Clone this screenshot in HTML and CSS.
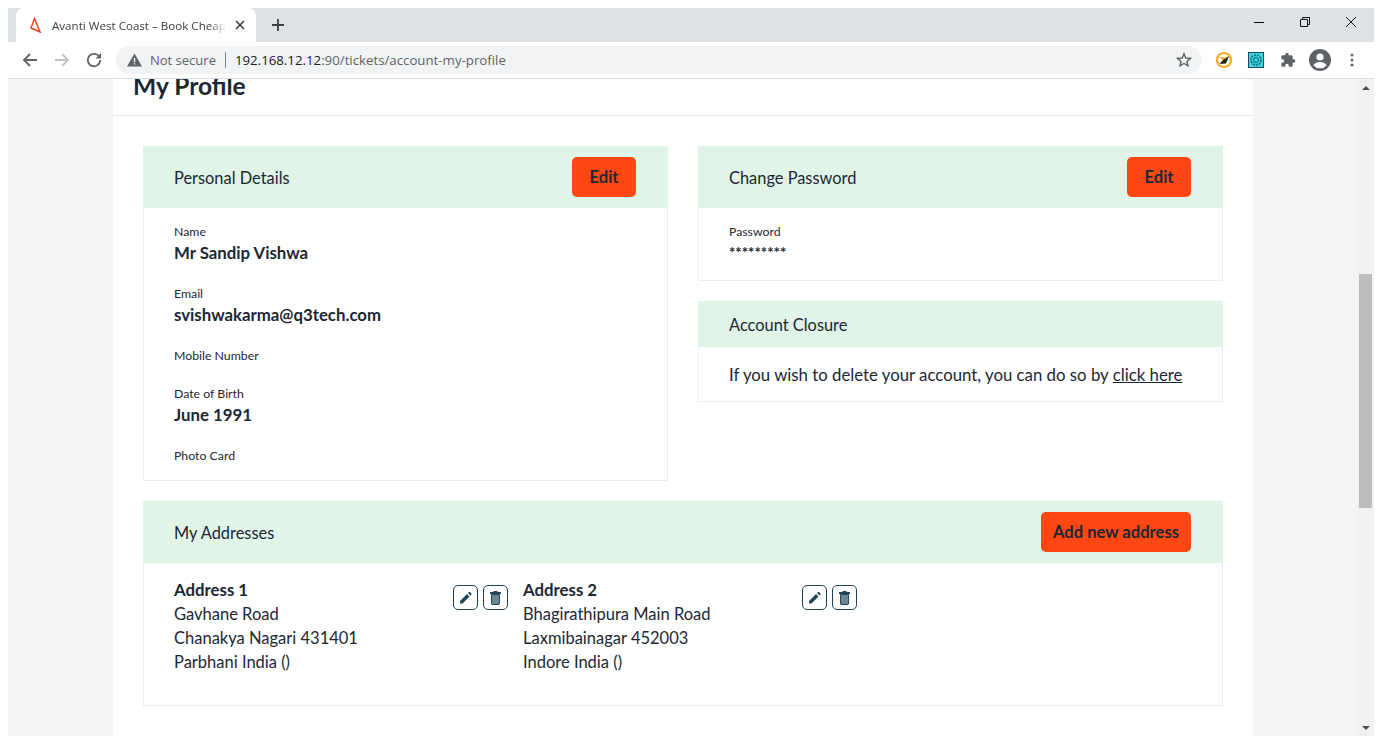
FILE: index.html
```html
<!DOCTYPE html>
<html lang="en">
<head>
    <meta charset="UTF-8">
    <title>Avanti West Coast – Book Cheap</title>
    <link rel="stylesheet" href="styles.css">
</head>
<body>
<div class="window">
    <!-- tab strip -->
    <div class="tabstrip">
        <div class="tab">
            <svg class="favicon" width="12" height="16" viewBox="0 0 12 16"><path d="M4.500 1.500 1 11 10 15Z" fill="none" stroke="#f0431c" stroke-width="1.500"/></svg>
            <span class="tab-title">Avanti West Coast – Book Cheap</span>
            <svg class="tab-close" width="10" height="10" viewBox="0 0 10 10"><path d="M1 1 9 9M9 1 1 9" stroke="#3c4043" stroke-width="1.7"/></svg>
        </div>
        <svg class="newtab" width="14" height="14" viewBox="0 0 14 14"><path d="M7 1V13M1 7H13" stroke="#3c4043" stroke-width="1.8"/></svg>
        <div class="winctl">
            <svg width="46" height="28" viewBox="0 0 46 28"><path d="M18 14.500H28" stroke="#111" stroke-width="1"/></svg>
            <svg width="46" height="28" viewBox="0 0 46 28"><path d="M18.500 11.500h7v7h-7zM20.500 11.500v-2h7v7h-2" fill="none" stroke="#111" stroke-width="1"/></svg>
            <svg width="46" height="28" viewBox="0 0 46 28"><path d="M18 9 28 19M28 9 18 19" stroke="#111" stroke-width="1"/></svg>
        </div>
    </div>

    <!-- toolbar -->
    <div class="toolbar">
        <span class="tool"><svg width="16" height="16" viewBox="0 0 16 16"><path d="M15 8H2M8 2 2 8l6 6" fill="none" stroke="#5f6368" stroke-width="1.8"/></svg></span>
        <span class="tool"><svg width="16" height="16" viewBox="0 0 16 16"><path d="M1 8H14M8 2l6 6-6 6" fill="none" stroke="#bdc1c6" stroke-width="1.8"/></svg></span>
        <span class="tool"><svg width="16" height="16" viewBox="0 0 16 16"><path d="M13.500 5.200A6.200 6.200 0 1 0 14.200 8" fill="none" stroke="#5f6368" stroke-width="1.8"/><path d="M15 1v5.500H9.500Z" fill="#5f6368"/></svg></span>
        <div class="omnibox">
            <svg width="15" height="14" viewBox="0 0 15 14"><path d="M7.500 .5 15 13.500H0Z" fill="#5f6368"/><path d="M6.800 5h1.400v4.300H6.800zM6.800 10.200h1.400v1.400H6.800z" fill="#fff"/></svg>
            <span class="not-secure">Not secure</span>
            <span class="omni-sep"></span>
            <span class="url"><span class="url-host">192.168.12.12</span>:90/tickets/account-my-profile</span>
            <svg class="star" width="16" height="16" viewBox="0 0 16 16"><path d="M8 1.800 9.800 6l4.600.4-3.500 3 1.100 4.500L8 11.500l-4 2.400 1.100-4.500-3.500-3L6.200 6Z" fill="none" stroke="#5f6368" stroke-width="1.400"/></svg>
        </div>
        <div class="tool-group">
            <span class="tool"><svg width="18" height="18" viewBox="0 0 18 18"><circle cx="9" cy="9" r="7" fill="#fff" stroke="#f7a823" stroke-width="2.200"/><path d="M4.500 6H11L8 9.500Z" fill="#f7a823"/><path d="M14 5 8 9 4.500 13l6.500-.5Z" fill="#222"/></svg></span>
            <span class="tool"><svg width="16" height="16" viewBox="0 0 16 16"><rect x=".5" y=".5" width="15" height="15" fill="#38d3e0" stroke="#17505a"/><circle cx="8" cy="8" r="5" fill="none" stroke="#17606e" stroke-width="1.400" stroke-dasharray="2 1"/><circle cx="8" cy="8" r="2.500" fill="none" stroke="#17606e"/></svg></span>
            <span class="tool"><svg width="16" height="16" viewBox="0 0 24 24"><path d="M20.500 11H19V7c0-1.100-.9-2-2-2h-4V3.500C13 2.120 11.880 1 10.500 1S8 2.120 8 3.500V5H4c-1.100 0-1.990.9-1.990 2v3.800H3.500c1.490 0 2.700 1.210 2.700 2.700s-1.210 2.700-2.700 2.700H2V20c0 1.100.9 2 2 2h3.800v-1.500c0-1.490 1.210-2.700 2.700-2.700 1.490 0 2.700 1.210 2.700 2.700V22H17c1.100 0 2-.9 2-2v-4h1.500c1.380 0 2.500-1.120 2.500-2.500S21.880 11 20.500 11z" fill="#5f6368"/></svg></span>
            <span class="tool"><svg width="22" height="22" viewBox="0 0 22 22"><circle cx="11" cy="11" r="11" fill="#5f6368"/><circle cx="11" cy="8" r="3.600" fill="#fff"/><path d="M4.300 16.200c1.500-2.300 4-3.200 6.700-3.200s5.200.9 6.700 3.200A8.600 8.600 0 0 1 11 19.200a8.600 8.600 0 0 1-6.700-3Z" fill="#fff"/></svg></span>
            <span class="tool"><svg width="4" height="14" viewBox="0 0 4 14"><circle cx="2" cy="2" r="1.500" fill="#5f6368"/><circle cx="2" cy="7" r="1.500" fill="#5f6368"/><circle cx="2" cy="12" r="1.500" fill="#5f6368"/></svg></span>
        </div>
    </div>

    <!-- page -->
    <div class="viewport">
        <div class="page">
            <main class="card">
                <div class="card-head">
                    <h1>My Profile</h1>
                </div>
                <div class="card-body">
                    <div class="columns">
                        <section class="panel">
                            <div class="panel-head">
                                <h2>Personal Details</h2>
                                <button class="btn" type="button">Edit</button>
                            </div>
                            <div class="panel-body">
                                <div class="field"><label>Name</label><strong>Mr Sandip Vishwa</strong></div>
                                <div class="field"><label>Email</label><strong>svishwakarma@q3tech.com</strong></div>
                                <div class="field"><label>Mobile Number</label></div>
                                <div class="field"><label>Date of Birth</label><strong>June 1991</strong></div>
                                <div class="field"><label>Photo Card</label></div>
                            </div>
                        </section>

                        <div class="stack">
                            <section class="panel">
                                <div class="panel-head">
                                    <h2>Change Password</h2>
                                    <button class="btn" type="button">Edit</button>
                                </div>
                                <div class="panel-body password-body">
                                    <label>Password</label>
                                    <div class="stars">*********</div>
                                </div>
                            </section>
                            <section class="panel">
                                <div class="panel-head slim">
                                    <h2>Account Closure</h2>
                                </div>
                                <div class="closure">If you wish to delete your account, you can do so by <a href="#">click here</a></div>
                            </section>
                        </div>
                    </div>

                    <section class="panel">
                        <div class="panel-head">
                            <h2>My Addresses</h2>
                            <button class="btn" type="button">Add new address</button>
                        </div>
                        <div class="addresses">
                            <div class="address">
                                <div class="address-text">
                                    <strong>Address 1</strong>
                                    <div>Gavhane Road</div>
                                    <div>Chanakya Nagari 431401</div>
                                    <div>Parbhani India ()</div>
                                </div>
                                <button class="icon-btn" type="button"><svg width="13" height="13" viewBox="0 0 13 13"><path d="M1 12.500V10L8 3l2.500 2.500-7 7ZM9 2l1-1h1l1.500 1.500v1l-1 1Z" fill="#1f4656"/></svg></button>
                                <button class="icon-btn" type="button"><svg width="11" height="14" viewBox="0 0 11 14"><path d="M0 1h11v2H0ZM3.500 0h4v1h-4Z" fill="#1f4656"/><path d="M1.500 3.500h8V13l-.5.5H2l-.5-.5Z" fill="#6c8591" stroke="#1f4656"/></svg></button>
                            </div>
                            <div class="address">
                                <div class="address-text">
                                    <strong>Address 2</strong>
                                    <div>Bhagirathipura Main Road</div>
                                    <div>Laxmibainagar 452003</div>
                                    <div>Indore India ()</div>
                                </div>
                                <button class="icon-btn" type="button"><svg width="13" height="13" viewBox="0 0 13 13"><path d="M1 12.500V10L8 3l2.500 2.500-7 7ZM9 2l1-1h1l1.500 1.500v1l-1 1Z" fill="#1f4656"/></svg></button>
                                <button class="icon-btn" type="button"><svg width="11" height="14" viewBox="0 0 11 14"><path d="M0 1h11v2H0ZM3.500 0h4v1h-4Z" fill="#1f4656"/><path d="M1.500 3.500h8V13l-.5.5H2l-.5-.5Z" fill="#6c8591" stroke="#1f4656"/></svg></button>
                            </div>
                        </div>
                    </section>
                </div>
            </main>
        </div>
        <div class="scrollbar">
            <span class="arrow-up"></span>
            <span class="thumb"></span>
            <span class="arrow-down"></span>
        </div>
    </div>
</div>
</body>
</html>
```

FILE: styles.css
```css
html, body {
    height: 100%;
    overflow: hidden;
}
body {
    background: #fff;
    color: #1b2733;
    font-family: Lato, Arial, sans-serif;
    font-size: 16px;
}
h1, h2 {
    margin: 0;
}
.window {
    height: 728px;
    display: flex;
    flex-direction: column;
}

/* browser chrome */
.tabstrip {
    height: 34px;
    flex: none;
    display: flex;
    align-items: center;
    background: #dee1e6;
    padding-left: 8px;
}
.tab {
    width: 240px;
    height: 34px;
    background: #fff;
    border-radius: 8px 8px 0 0;
    display: flex;
    align-items: center;
    padding: 0 11px 0 14px;
    box-sizing: border-box;
}
.favicon {
    flex: none;
}
.tab-title {
    margin-left: 10px;
    width: 174px;
    overflow: hidden;
    white-space: nowrap;
    font-family: "Open Sans", Arial, sans-serif;
    font-size: 11.6px;
    color: #3c4043;
    -webkit-mask-image: linear-gradient(to right, #000 158px, transparent 174px);
    mask-image: linear-gradient(to right, #000 158px, transparent 174px);
}
.tab-close {
    margin-left: auto;
}
.newtab {
    margin-left: 15px;
}
.winctl {
    margin-left: auto;
    display: flex;
    align-items: center;
    margin-top: -6px;
}
.toolbar {
    height: 36px;
    flex: none;
    display: flex;
    align-items: center;
    padding: 0 6px;
    background: #fff;
    border-bottom: 1px solid #dadce0;
}
.tool {
    width: 32px;
    height: 32px;
    display: flex;
    align-items: center;
    justify-content: center;
    flex: none;
}
.tool-group {
    display: flex;
    margin-left: 6px;
}
.omnibox {
    flex: 1;
    height: 28px;
    margin-left: 6px;
    background: #f1f3f4;
    border-radius: 14px;
    display: flex;
    align-items: center;
    padding: 0 10px 0 11px;
    font-family: "Open Sans", Arial, sans-serif;
    font-size: 13px;
}
.not-secure {
    margin-left: 8px;
    color: #5f6368;
}
.omni-sep {
    width: 1px;
    height: 16px;
    background: #80868b;
    margin: 0 9px;
}
.url {
    color: #5f6368;
    font-size: 13.25px;
}
.url-host {
    color: #202124;
}
.star {
    margin-left: auto;
}

/* page */
.viewport {
    flex: 1;
    min-height: 0;
    display: flex;
}
.page {
    flex: 1;
    background: #f4f4f4;
    padding: 0 104px 0 105px;
    overflow: hidden;
}
.card {
    background: #fff;
    height: 100%;
}
.card-head {
    height: 36px;
    padding-left: 20px;
    border-bottom: 1px solid #e3e5e7;
}
.card-head h1 {
    font-size: 24.5px;
    font-weight: 700;
    line-height: 14px;
}
.card-body {
    padding: 30px;
}
.columns {
    display: grid;
    grid-template-columns: 1fr 1fr;
    gap: 30px;
    margin-bottom: 20px;
}
.stack {
    display: flex;
    flex-direction: column;
    gap: 20px;
}
.panel {
    box-sizing: border-box;
    border: 1px solid #e9eef2;
    border-top: 0;
}
.panel-head {
    height: 62px;
    margin: 0 -1px;
    padding: 0 32px 0 31px;
    background: #e0f4e8;
    display: flex;
    align-items: center;
    justify-content: space-between;
}
.panel-head.slim {
    height: 46px;
}
.panel-head h2 {
    font-size: 16.4px;
    font-weight: 400;
}
.btn {
    height: 40px;
    padding: 0 12px;
    min-width: 64px;
    border: 0;
    border-radius: 5px;
    background: #ff4713;
    color: #1b2733;
    font-family: inherit;
    font-size: 16.6px;
    font-weight: 700;
}
.panel-body {
    padding: 14px 30px 15px;
}
label {
    display: block;
    font-size: 12.3px;
    line-height: 19px;
}
.field {
    margin-bottom: 19px;
}
.field:last-child {
    margin-bottom: 0;
}
.field strong {
    display: block;
    font-size: 16.8px;
    line-height: 24px;
}
.password-body {
    height: 72px;
    box-sizing: border-box;
}
.stars {
    font-size: 15px;
    font-weight: 700;
    line-height: 22px;
}
.closure {
    padding: 0 30px;
    height: 54px;
    display: flex;
    align-items: center;
    gap: 4px;
    font-size: 16.8px;
}
.closure a {
    color: inherit;
}
.addresses {
    display: flex;
    padding: 15px 30px 31px;
    font-size: 16.5px;
    line-height: 24px;
}
.address {
    width: 334px;
    margin-right: 15px;
    display: flex;
    align-items: flex-start;
    gap: 5px;
}
.address-text {
    flex: 1;
}
.address-text strong {
    font-size: 16.8px;
}
.icon-btn {
    width: 25px;
    height: 25px;
    margin-top: 7px;
    padding: 0;
    border: 1px solid #1f4656;
    border-radius: 5px;
    background: #fff;
    display: flex;
    align-items: center;
    justify-content: center;
}

/* scrollbar */
.scrollbar {
    width: 17px;
    flex: none;
    background: #f1f1f1;
    display: flex;
    flex-direction: column;
    align-items: center;
}
.arrow-up {
    margin-top: 7px;
    border: 4px solid transparent;
    border-top: 0;
    border-bottom: 4px solid #505050;
}
.thumb {
    width: 13px;
    height: 234px;
    margin-top: 184px;
    background: #bdbdbd;
}
.arrow-down {
    margin-top: auto;
    margin-bottom: 6px;
    border: 4px solid transparent;
    border-bottom: 0;
    border-top: 4px solid #505050;
}
```
